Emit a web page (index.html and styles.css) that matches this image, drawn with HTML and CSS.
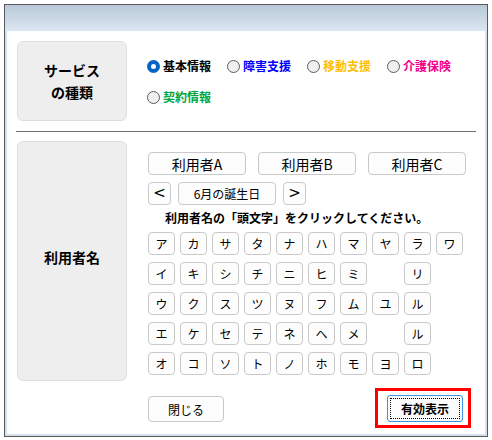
FILE: index.html
```html
<!DOCTYPE html>
<html lang="ja">
<head>
<meta charset="utf-8">
<title>利用者選択</title>
<link rel="stylesheet" href="styles.css">
</head>
<body>
<div class="window">
  <div class="titlebar"></div>
  <div class="body">
    <div class="section s1">
      <div class="label-box">サービス<br>の種類</div>
      <div class="options">
        <div class="opt-row">
          <label class="opt"><span class="radio checked"></span><span class="opt-text c-black">基本情報</span></label>
          <label class="opt"><span class="radio"></span><span class="opt-text c-blue">障害支援</span></label>
          <label class="opt"><span class="radio"></span><span class="opt-text c-orange">移動支援</span></label>
          <label class="opt"><span class="radio"></span><span class="opt-text c-pink">介護保険</span></label>
        </div>
        <div class="opt-row">
          <label class="opt"><span class="radio"></span><span class="opt-text c-green">契約情報</span></label>
        </div>
      </div>
    </div>
    <div class="divider"></div>
    <div class="section s2">
      <div class="label-box tall">利用者名</div>
      <div class="column">
        <div class="user-row">
          <button class="btn user">利用者A</button>
          <button class="btn user">利用者B</button>
          <button class="btn user">利用者C</button>
        </div>
        <div class="month-row">
          <button class="btn arrow">&lt;</button>
          <button class="btn month">6月の誕生日</button>
          <button class="btn arrow">&gt;</button>
        </div>
        <div class="hint">利用者名の「頭文字」をクリックしてください。</div>
        <div class="kana">
          <button class="btn k">ア</button><button class="btn k">カ</button><button class="btn k">サ</button><button class="btn k">タ</button><button class="btn k">ナ</button><button class="btn k">ハ</button><button class="btn k">マ</button><button class="btn k">ヤ</button><button class="btn k">ラ</button><button class="btn k">ワ</button>
          <button class="btn k">イ</button><button class="btn k">キ</button><button class="btn k">シ</button><button class="btn k">チ</button><button class="btn k">ニ</button><button class="btn k">ヒ</button><button class="btn k">ミ</button><span class="k-empty"></span><button class="btn k">リ</button><span class="k-empty"></span>
          <button class="btn k">ウ</button><button class="btn k">ク</button><button class="btn k">ス</button><button class="btn k">ツ</button><button class="btn k">ヌ</button><button class="btn k">フ</button><button class="btn k">ム</button><button class="btn k">ユ</button><button class="btn k">ル</button><span class="k-empty"></span>
          <button class="btn k">エ</button><button class="btn k">ケ</button><button class="btn k">セ</button><button class="btn k">テ</button><button class="btn k">ネ</button><button class="btn k">ヘ</button><button class="btn k">メ</button><span class="k-empty"></span><button class="btn k">ル</button><span class="k-empty"></span>
          <button class="btn k">オ</button><button class="btn k">コ</button><button class="btn k">ソ</button><button class="btn k">ト</button><button class="btn k">ノ</button><button class="btn k">ホ</button><button class="btn k">モ</button><button class="btn k">ヨ</button><button class="btn k">ロ</button><span class="k-empty"></span>
        </div>
        <div class="bottom-row">
          <button class="btn close">閉じる</button>
          <div class="highlight">
            <button class="btn ok"><span class="focus-ring">有効表示</span></button>
          </div>
        </div>
      </div>
    </div>
  </div>
</div>
</body>
</html>
```

FILE: styles.css
```css
html, body {
  margin: 0;
  padding: 0;
  background: #ffffff;
}

body {
  font-family: "Noto Sans CJK JP", "Noto Sans", sans-serif;
  color: #000;
}

.window {
  margin: 4px 0 0 4px;
  width: 484px;
  height: 433px;
  box-sizing: border-box;
  border: 1px solid #5a5a5a;
  display: flex;
  flex-direction: column;
}

.titlebar {
  height: 26px;
  flex: none;
  background: linear-gradient(to bottom, #b9c9d8, #dbe6f1);
}

.body {
  flex: 1;
  border: 2px solid #d5e1ed;
  border-top: none;
  background: #ffffff;
  padding: 10px 10px 0 10px;
}

.section {
  display: flex;
  align-items: flex-start;
}

.label-box {
  width: 110px;
  height: 80px;
  box-sizing: border-box;
  flex: none;
  background: #eeeeee;
  border: 1px solid #dedede;
  border-radius: 6px;
  display: flex;
  align-items: center;
  justify-content: center;
  text-align: center;
  font-size: 14px;
  font-weight: bold;
  line-height: 22px;
}

.label-box.tall {
  height: 240px;
  padding-bottom: 8px;
}

.options {
  margin-left: 20px;
  margin-top: 15px;
  display: flex;
  flex-direction: column;
  gap: 11px;
}

.opt-row {
  display: flex;
  height: 20px;
  align-items: center;
}

.opt {
  display: flex;
  align-items: center;
  margin-right: 16px;
}

.radio {
  width: 13px;
  height: 13px;
  box-sizing: border-box;
  border-radius: 50%;
  border: 1px solid #5c5c5c;
  background: #f0f0f0;
  margin-right: 3px;
}

.radio.checked {
  border: 4px solid #0565c6;
  background: #ffffff;
}

.opt-text {
  font-size: 12px;
  font-weight: bold;
  line-height: 20px;
  width: 48px;
  white-space: nowrap;
}

.c-black { color: #000000; }
.c-blue { color: #0000ff; }
.c-orange { color: #ffbf00; }
.c-pink { color: #f5008a; }
.c-green { color: #00a63c; }

.divider {
  height: 1px;
  background: #6e6e6e;
  margin: 10px -1px 9px -1px;
}

.column {
  margin-left: 21px;
  padding-top: 11px;
  width: 318px;
}

.btn {
  font-family: "Noto Sans CJK JP", "Noto Sans", sans-serif;
  background: #fdfdfd;
  border: 1px solid #c9c9c9;
  border-radius: 4px;
  box-sizing: border-box;
  padding: 0;
  margin: 0;
  color: #000;
  display: flex;
  align-items: center;
  justify-content: center;
}

.user-row {
  display: flex;
  gap: 12px;
}

.btn.user {
  width: 98px;
  height: 23px;
  font-size: 14px;
}

.month-row {
  display: flex;
  gap: 7px;
  margin-top: 7px;
}

.btn.arrow {
  width: 23px;
  height: 23px;
  font-family: "DejaVu Sans", sans-serif;
  font-size: 15px;
  font-weight: normal;
  line-height: 1;
}

.btn.month {
  width: 98px;
  height: 23px;
  font-size: 12px;
}

.hint {
  margin-top: 3px;
  padding-left: 17px;
  font-size: 12px;
  font-weight: bold;
  line-height: 20px;
  white-space: nowrap;
}

.kana {
  margin-top: 4px;
  display: grid;
  grid-template-columns: repeat(10, 27px);
  grid-auto-rows: 23px;
  column-gap: 5px;
  row-gap: 7px;
}

.btn.k {
  width: 27px;
  height: 23px;
  font-size: 12px;
}

.bottom-row {
  margin-top: 20px;
  display: flex;
  justify-content: space-between;
  align-items: flex-end;
}

.btn.close {
  width: 76px;
  height: 26px;
  font-size: 12px;
}

.highlight {
  position: relative;
  margin-right: 3px;
}

.highlight::after {
  content: "";
  position: absolute;
  left: -12px;
  right: -8px;
  top: -7px;
  bottom: -6px;
  border: 3px solid #ff0000;
  pointer-events: none;
}

.btn.ok {
  width: 76px;
  height: 27px;
  border: 1px solid #3c94e0;
  border-radius: 3px;
  padding: 2px;
  font-size: 12px;
  font-weight: bold;
}

.focus-ring {
  flex: 1;
  align-self: stretch;
  display: flex;
  align-items: center;
  justify-content: center;
  border: 1px dotted #000;
}
```
